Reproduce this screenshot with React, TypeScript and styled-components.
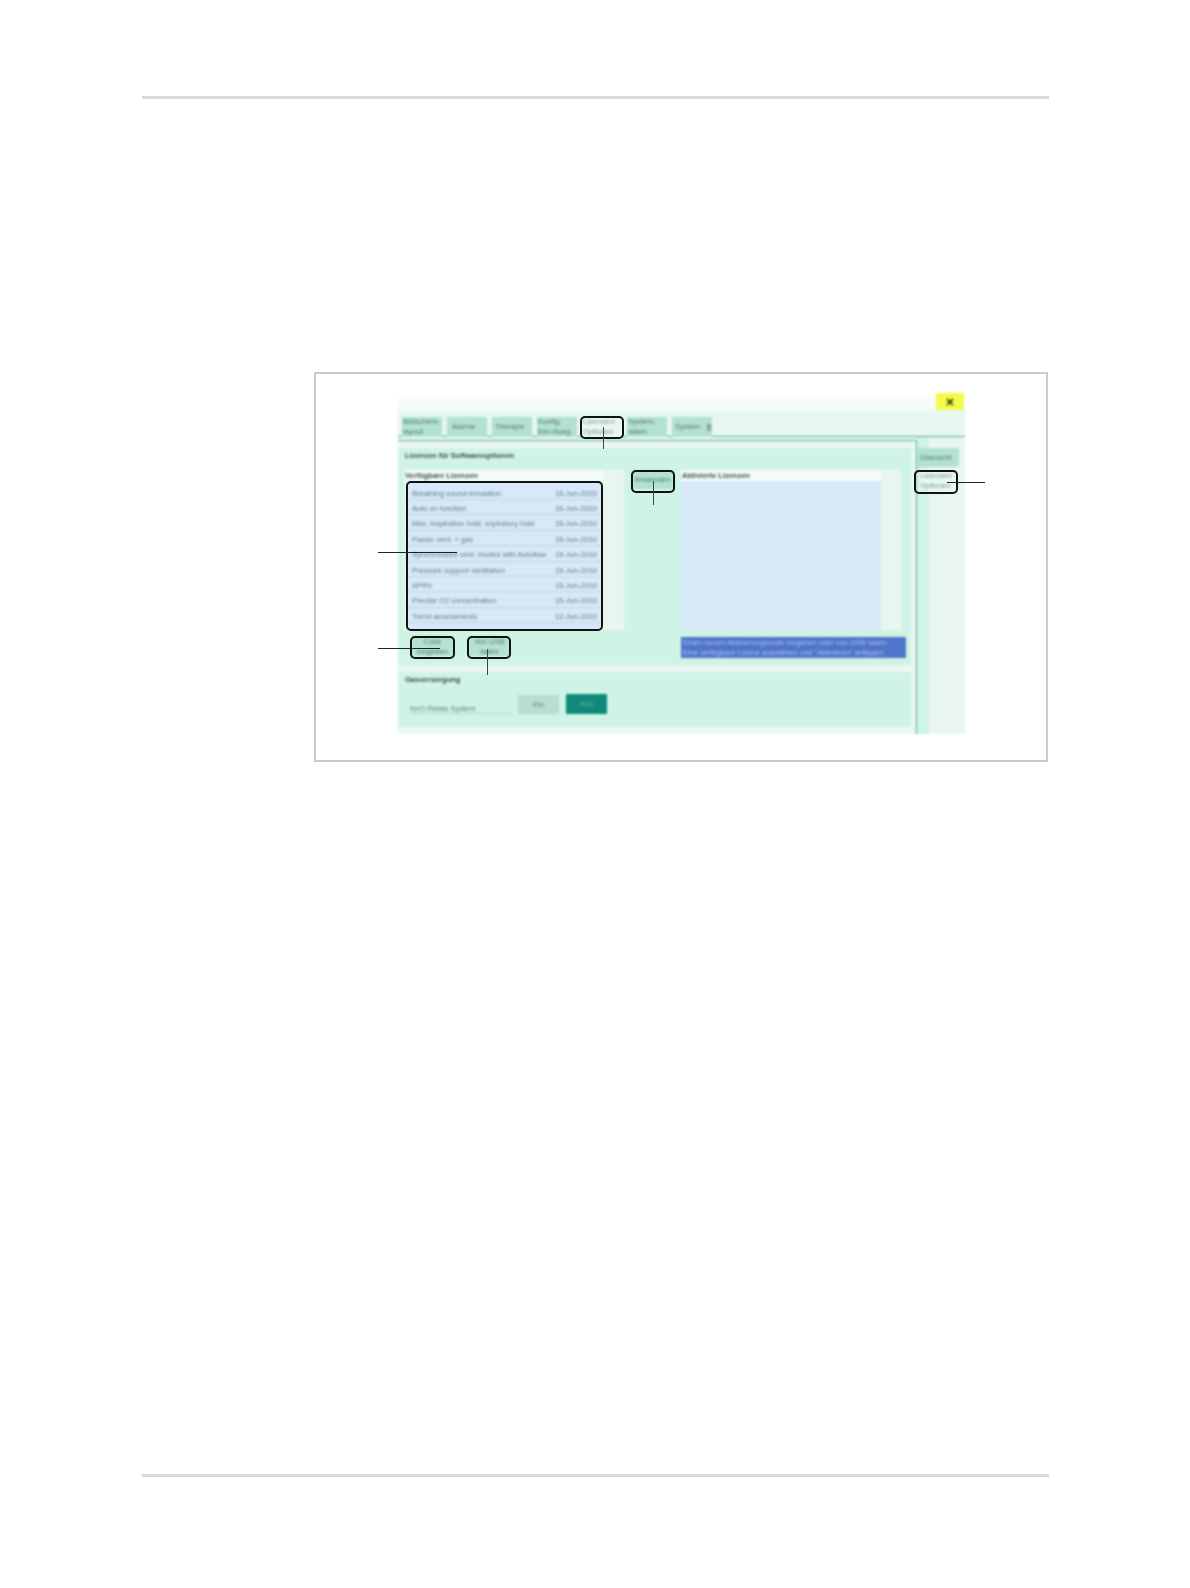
import styled, { createGlobalStyle } from "styled-components";

const GlobalStyle = createGlobalStyle`
  body {
    margin: 0;
    background: #fff;
    font-family: "Liberation Sans", Arial, sans-serif;
  }
`;

const Page = styled.div`
  width: 1190px;
  height: 1588px;
  box-sizing: border-box;
  padding: 96px 141px 0 142px;
`;
const Rule = styled.div`
  height: 3px;
  background: #d9d9d9;
`;
const Figure = styled.div`
  position: relative;
  box-sizing: border-box;
  width: 734px;
  height: 390px;
  margin: 273px 0 712px 172px;
  padding: 19px 0 0 82px;
  border: 2px solid #cbcbcb;
`;
const Screen = styled.div`
  width: 567px;
  height: 341px;
  display: flex;
  flex-direction: column;
  background: #eaf7f1;
  filter: blur(0.8px);
  font-size: 7.5px;
  line-height: 10px;
  color: #5f7f78;
`;
const TitleBar = styled.div`
  height: 18px;
  display: flex;
  justify-content: flex-end;
  align-items: flex-start;
  padding-right: 1px;
  background: linear-gradient(#fdfefd, #f3faf7);
`;
const CloseButton = styled.div`
  width: 28px;
  height: 17px;
  display: flex;
  align-items: center;
  justify-content: center;
  background: #f2fb4a;
`;
const TabBar = styled.div`
  height: 26px;
  box-sizing: border-box;
  display: flex;
  gap: 5px;
  padding: 6px 0 0 4px;
  border-bottom: 1px solid #4fae8e;
  background: #e7f6f0;
`;
const Tab = styled.div<{ $active?: boolean }>`
  width: 40px;
  height: 20px;
  box-sizing: border-box;
  display: flex;
  align-items: center;
  gap: 7px;
  padding-left: 1px;
  white-space: pre;
  overflow: hidden;
  background: ${(props) => (props.$active ? "#e9f7f1" : "#b3e2d0")};
  color: ${(props) => (props.$active ? "#7d9a92" : "#557c72")};
`;
const TabIcon = styled.span`
  width: 4px;
  height: 7px;
  background: #86a89d;
`;
const Body = styled.div`
  flex: 1;
  display: flex;
`;
const Main = styled.div`
  width: 519px;
  box-sizing: border-box;
  margin-top: 3px;
  padding: 7px 5px 0 0;
  border-top: 1px solid #4fae8e;
  border-right: 1px solid #4fae8e;
`;
const Panel = styled.div<{ $height: number }>`
  height: ${(props) => props.$height}px;
  margin-bottom: 7px;
  background: #cff4e6;
`;
const PanelTitle = styled.div`
  height: 22px;
  padding: 3px 0 0 7px;
  box-sizing: border-box;
  font-weight: bold;
  color: #3f4e49;
`;
const ListsRow = styled.div`
  display: grid;
  grid-template-columns: 220px 57px 220px;
  padding-left: 6px;
`;
const ListBlock = styled.div`
  height: 160px;
  display: grid;
  grid-template-columns: 200px 20px;
  background: #e8f6f0;
`;
const List = styled.div`
  display: flex;
  flex-direction: column;
`;
const ListHeader = styled.div`
  height: 11px;
  padding: 1px 0 0 1px;
  box-sizing: border-box;
  background: #f4fbf8;
  font-weight: bold;
  color: #414f4b;
`;
const Rows = styled.div<{ $inset: boolean }>`
  flex: 1;
  margin: 0 ${(props) => (props.$inset ? "2px" : "0")};
  padding-top: ${(props) => (props.$inset ? "3.6px" : "0")};
  background: #d7e9f8;
`;
const Row = styled.div`
  height: 15.4px;
  box-sizing: border-box;
  display: flex;
  justify-content: space-between;
  align-items: flex-start;
  padding: 4px 5px 0 6px;
  border-bottom: 1px solid #b9d6e4;
  color: #617a8b;
`;
const Button = styled.div<{ $height?: number }>`
  width: 41px;
  height: ${(props) => props.$height ?? 19}px;
  display: flex;
  align-items: center;
  justify-content: center;
  text-align: center;
  white-space: pre;
  background: #b3e2d0;
  color: #557c72;
`;
const ApplyColumn = styled.div`
  padding-left: 8px;
`;
const BottomRow = styled.div`
  display: flex;
  gap: 16px;
  padding: 7px 5px 0 14px;
`;
const InfoBox = styled.div`
  width: 225px;
  height: 21px;
  box-sizing: border-box;
  margin-left: auto;
  padding: 1px 0 0 2px;
  white-space: pre;
  background: #4f74c9;
  color: #a6c0f0;
`;
const GasTitle = styled.div`
  padding: 3px 0 0 7px;
  height: 22px;
  box-sizing: border-box;
  font-weight: bold;
  color: #3f4e49;
`;
const GasRow = styled.div`
  display: flex;
  align-items: flex-end;
  gap: 7px;
  padding-left: 12px;
`;
const GasLabel = styled.div`
  width: 101px;
  height: 15px;
  box-sizing: border-box;
  padding-top: 5px;
  border-bottom: 1px solid #a9d3c3;
  color: #5f7f78;
`;
const GasOn = styled(Button)`
  background: #b7decf;
  color: #648c80;
`;
const GasOff = styled(Button)`
  height: 20px;
  background: #0f8a78;
  color: #5fb7a6;
`;
const Sidebar = styled.div`
  flex: 1;
  padding: 11px 0 0 1px;
  background: linear-gradient(90deg, #cff4e6 12px, #e9f6f0 12px);
`;
const SideActive = styled(Button)`
  margin-top: 2px;
  justify-content: flex-start;
  text-align: left;
  padding: 2px 0 0 2px;
  box-sizing: border-box;
  background: #e9f7f1;
  color: #7d9a92;
`;
const SideTab = styled(Button)`
  justify-content: flex-start;
  padding-left: 2px;
  box-sizing: border-box;
`;
const Callout = styled.div<{ $x: number; $y: number; $w: number; $h: number }>`
  position: absolute;
  left: ${(props) => props.$x - 316}px;
  top: ${(props) => props.$y - 373}px;
  width: ${(props) => props.$w}px;
  height: ${(props) => props.$h}px;
  box-sizing: border-box;
  border: 2px solid #111;
  border-radius: 5px;
`;
const LeaderH = styled.div<{ $x: number; $y: number; $w: number }>`
  position: absolute;
  left: ${(props) => props.$x - 316}px;
  top: ${(props) => props.$y - 373}px;
  width: ${(props) => props.$w}px;
  height: 1px;
  background: #222;
`;
const LeaderV = styled.div<{ $x: number; $y: number; $h: number }>`
  position: absolute;
  left: ${(props) => props.$x - 316}px;
  top: ${(props) => props.$y - 373}px;
  width: 1px;
  height: ${(props) => props.$h}px;
  background: #444;
`;

const licences = [
  ["Breathing sound emulation", "15-Jun-2010"],
  ["Auto on function", "15-Jun-2010"],
  ["Max. inspiration hold, expiratory hold", "15-Jun-2010"],
  ["Passiv vent. + gas", "15-Jun-2010"],
  ["Synchronized vent. modes with Autoflow", "15-Jun-2010"],
  ["Pressure support ventilation", "15-Jun-2010"],
  ["APRV", "15-Jun-2010"],
  ["Precise O2 concentration", "15-Jun-2010"],
  ["Trend accessments", "12-Jun-2010"],
];

const tabs = [
  { label: "Bildschirm-\nlayout" },
  { label: "  Alarme" },
  { label: " Therapie" },
  { label: "Konfig.\nEin-/Ausg." },
  { label: "Lizenzen/\nOptionen", active: true },
  { label: "System-\ndaten" },
];

function App() {
  return (
    <Page>
      <GlobalStyle />
      <Rule />
      <Figure>
        <Screen>
          <TitleBar>
            <CloseButton>
              <svg width="8" height="8" viewBox="0 0 8 8">
                <path d="M1 1L7 7M7 1L1 7" stroke="#000" strokeWidth="1.2" />
              </svg>
            </CloseButton>
          </TitleBar>
          <TabBar>
            {tabs.map((tab) => (
              <Tab key={tab.label} $active={tab.active}>
                {tab.label}
              </Tab>
            ))}
            <Tab>
              {" System"}
              <TabIcon />
            </Tab>
          </TabBar>
          <Body>
            <Main>
              <Panel $height={217}>
                <PanelTitle>Lizenzen für Softwareoptionen</PanelTitle>
                <ListsRow>
                  <ListBlock>
                    <List>
                      <ListHeader>Verfügbare Lizenzen</ListHeader>
                      <Rows $inset>
                        {licences.map(([name, date]) => (
                          <Row key={name}>
                            <span>{name}</span>
                            <span>{date}</span>
                          </Row>
                        ))}
                      </Rows>
                    </List>
                  </ListBlock>
                  <ApplyColumn>
                    <Button>Anwenden</Button>
                  </ApplyColumn>
                  <ListBlock>
                    <List>
                      <ListHeader>Aktivierte Lizenzen</ListHeader>
                      <Rows $inset={false} />
                    </List>
                  </ListBlock>
                </ListsRow>
                <BottomRow>
                  <Button>{"Code\neingeben"}</Button>
                  <Button>{"Von USB\nladen"}</Button>
                  <InfoBox>
                    {"Einen neuen Aktivierungscode eingeben oder von USB laden.\nEine verfügbare Lizenz auswählen und \"Aktivieren\" antippen."}
                  </InfoBox>
                </BottomRow>
              </Panel>
              <Panel $height={55}>
                <GasTitle>Gasversorgung</GasTitle>
                <GasRow>
                  <GasLabel>NxO-Relais System</GasLabel>
                  <GasOn>Ein</GasOn>
                  <GasOff>Aus</GasOff>
                </GasRow>
              </Panel>
            </Main>
            <Sidebar>
              <SideTab>Übersicht</SideTab>
              <SideActive $height={22}>{"Lizenzen/\nOptionen"}</SideActive>
            </Sidebar>
          </Body>
        </Screen>

        <Callout $x={580} $y={415} $w={44} $h={23} />
        <LeaderV $x={603} $y={426} $h={22} />
        <Callout $x={631} $y={469} $w={44} $h={23} />
        <LeaderV $x={653} $y={480} $h={24} />
        <Callout $x={406} $y={480} $w={197} $h={150} />
        <LeaderH $x={378} $y={551} $w={79} />
        <Callout $x={410} $y={635} $w={45} $h={23} />
        <LeaderH $x={378} $y={647} $w={62} />
        <Callout $x={467} $y={635} $w={44} $h={23} />
        <LeaderV $x={487} $y={648} $h={26} />
        <Callout $x={914} $y={469} $w={44} $h={24} />
        <LeaderH $x={947} $y={481} $w={38} />
      </Figure>
      <Rule />
    </Page>
  );
}

export default App;
